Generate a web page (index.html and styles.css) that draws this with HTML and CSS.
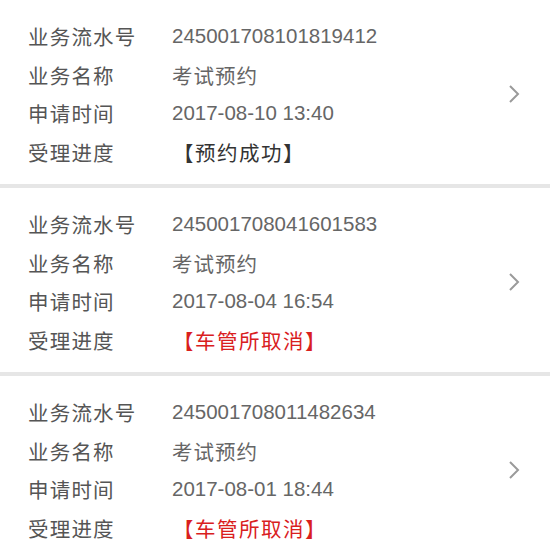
FILE: index.html
```html
<!DOCTYPE html>
<html lang="zh-CN">
<head>
  <meta charset="UTF-8" />
  <meta name="viewport" content="width=device-width, initial-scale=1.0"/>
  <title>业务查询</title>
  <link rel="stylesheet" href="styles.css">
</head>
<body>
  <div class="list">
    <div class="card">
      <div class="rows">
        <div class="row"><span class="label">业务流水号</span><span class="value">245001708101819412</span></div>
        <div class="row"><span class="label">业务名称</span><span class="value cn">考试预约</span></div>
        <div class="row"><span class="label">申请时间</span><span class="value">2017-08-10 13:40</span></div>
        <div class="row"><span class="label">受理进度</span><span class="status">【预约成功】</span></div>
      </div>
      <svg class="arrow" width="12" height="20" viewBox="0 0 12 20"><path d="M2 2 L10 10 L2 18" fill="none" stroke="#9a9a9a" stroke-width="2"/></svg>
    </div>

    <div class="card">
      <div class="rows">
        <div class="row"><span class="label">业务流水号</span><span class="value">245001708041601583</span></div>
        <div class="row"><span class="label">业务名称</span><span class="value cn">考试预约</span></div>
        <div class="row"><span class="label">申请时间</span><span class="value">2017-08-04 16:54</span></div>
        <div class="row"><span class="label">受理进度</span><span class="status red">【车管所取消】</span></div>
      </div>
      <svg class="arrow" width="12" height="20" viewBox="0 0 12 20"><path d="M2 2 L10 10 L2 18" fill="none" stroke="#9a9a9a" stroke-width="2"/></svg>
    </div>

    <div class="card">
      <div class="rows">
        <div class="row"><span class="label">业务流水号</span><span class="value">245001708011482634</span></div>
        <div class="row"><span class="label">业务名称</span><span class="value cn">考试预约</span></div>
        <div class="row"><span class="label">申请时间</span><span class="value">2017-08-01 18:44</span></div>
        <div class="row"><span class="label">受理进度</span><span class="status red">【车管所取消】</span></div>
      </div>
      <svg class="arrow" width="12" height="20" viewBox="0 0 12 20"><path d="M2 2 L10 10 L2 18" fill="none" stroke="#9a9a9a" stroke-width="2"/></svg>
    </div>
  </div>
</body>
</html>
```

FILE: styles.css
```css
body {
  font-family: 'Liberation Sans', 'Noto Sans CJK SC', sans-serif;
  margin: 0;
  padding: 0;
  background-color: #fff;
}
.list {
  display: flex;
  flex-direction: column;
}
.card {
  display: flex;
  align-items: center;
  padding: 17px 30px 13px 28px;
  border-bottom: 4px solid #e6e6e6;
}
.rows {
  flex: 1;
}
.row {
  display: flex;
  height: 38.5px;
  align-items: center;
  font-size: 20.5px;
}
.label {
  width: 144px;
  color: #555;
  letter-spacing: 1.2px;
}
.value {
  color: #666;
}
.value.cn {
  letter-spacing: 1px;
}
.status {
  color: #333;
  letter-spacing: 1.5px;
  margin-left: 1px;
}
.status.red {
  color: #d9201e;
}
.arrow {
  display: block;
}
```
